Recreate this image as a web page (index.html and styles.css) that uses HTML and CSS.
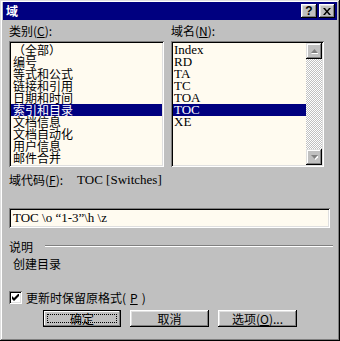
FILE: index.html
```html
<!DOCTYPE html>
<html lang="zh-CN">
<head>
  <meta charset="UTF-8" />
  <title>域</title>
  <link rel="stylesheet" href="styles.css">
</head>
<body>
  <div class="window">

    <!-- 标题栏 -->
    <div class="titlebar">
      <span class="title">域</span>
      <div class="title-btns">
        <button class="tb-btn help">?</button>
        <button class="tb-btn close">
          <svg width="8" height="7" viewBox="0 0 8 7">
            <path d="M0 0h2l2 2.5L6 0h2L5 3.5 8 7H6L4 4.5 2 7H0l3-3.5z" fill="#000"/>
          </svg>
        </button>
      </div>
    </div>

    <div class="content">
      <!-- 两个列表 -->
      <div class="lists">
        <div class="col col-left">
          <div class="label">类别(<u>C</u>):</div>
          <div class="listbox">
            <ul class="items">
              <li>（全部）</li>
              <li>编号</li>
              <li>等式和公式</li>
              <li>链接和引用</li>
              <li>日期和时间</li>
              <li class="selected">索引和目录</li>
              <li>文档信息</li>
              <li>文档自动化</li>
              <li>用户信息</li>
              <li>邮件合并</li>
            </ul>
          </div>
        </div>
        <div class="col col-right">
          <div class="label">域名(<u>N</u>):</div>
          <div class="listbox">
            <ul class="items serif">
              <li>Index</li>
              <li>RD</li>
              <li>TA</li>
              <li>TC</li>
              <li>TOA</li>
              <li class="selected">TOC</li>
              <li>XE</li>
            </ul>
            <div class="scrollbar">
              <div class="sb-btn">
                <svg width="7" height="5" viewBox="0 0 7 5"><path d="M4 1l4 4H0z" fill="#fff"/><path d="M3.5 0L7 4H0z" fill="#808080"/></svg>
              </div>
              <div class="sb-track"></div>
              <div class="sb-btn">
                <svg width="7" height="5" viewBox="0 0 7 5"><path d="M1 1h7L4.5 5z" fill="#fff"/><path d="M0 0h7L3.5 4z" fill="#808080"/></svg>
              </div>
            </div>
          </div>
        </div>
      </div>

      <!-- 域代码 -->
      <div class="code-row">
        <span>域代码(<u>F</u>):</span>
        <span class="syntax">TOC [Switches]</span>
      </div>
      <div class="field">TOC \o “1-3”\h \z</div>

      <!-- 说明 -->
      <div class="group">
        <span>说明</span>
        <span class="rule"></span>
      </div>
      <div class="desc">创建目录</div>

      <label class="check">
        <span class="box">
          <svg width="7" height="7" viewBox="0 0 7 7"><path d="M0 2l2 2 5-5v3L2 7 0 5z" fill="#000"/></svg>
        </span>
        更新时保留原格式(<u>P</u>)
      </label>

      <div class="buttons">
        <button class="btn default"><span class="focus">确定</span></button>
        <button class="btn">取消</button>
        <button class="btn">选项(<u>O</u>)...</button>
      </div>
    </div>
  </div>
</body>
</html>
```

FILE: styles.css
```css
* {
  box-sizing: border-box;
}
body {
  margin: 0;
  background: #c0c0c0;
  font-family: "Noto Sans CJK SC", "Liberation Sans", sans-serif;
  font-size: 12px;
  color: #000;
}

/* 窗口外框 */
.window {
  width: 340px;
  height: 341px;
  padding: 2px 3px 3px 3px;
  background: #c0c0c0;
  box-shadow: inset -1px -1px #000, inset 1px 1px #dfdfdf,
              inset -2px -2px #808080, inset 2px 2px #fff;
}

/* 标题栏 */
.titlebar {
  height: 18px;
  background: #000080;
  display: flex;
  align-items: center;
  justify-content: space-between;
  padding: 0 2px 0 3px;
}
.title {
  color: #fff;
  font-weight: 700;
  font-size: 12px;
  line-height: 14px;
}
.title-btns {
  display: flex;
  gap: 2px;
}
.tb-btn {
  width: 16px;
  height: 14px;
  padding: 0;
  border: none;
  background: #c0c0c0;
  box-shadow: inset -1px -1px #000, inset 1px 1px #fff,
              inset -2px -2px #808080, inset 2px 2px #dfdfdf;
  display: flex;
  align-items: center;
  justify-content: center;
  font-family: "Liberation Sans", sans-serif;
  font-weight: 700;
  font-size: 12px;
  line-height: 12px;
}
.tb-btn.close svg {
  margin-top: 0;
}

/* 内容区 */
.content {
  padding: 0 4px 0 6px;
}
.lists {
  display: flex;
  gap: 7px;
}
.col-left {
  width: 155px;
}
.col-right {
  width: 153px;
}
.label {
  height: 21px;
  line-height: 20px;
  padding-top: 1px;
}

/* 列表框 */
.listbox {
  height: 126px;
  background: #fffbf0;
  box-shadow: inset 1px 1px #808080, inset -1px -1px #fff,
              inset 2px 2px #000, inset -2px -2px #dfdfdf;
  padding: 3px 2px 2px 2px;
  display: flex;
  overflow: hidden;
}
.items {
  list-style: none;
  margin: 0;
  padding: 0;
  flex: 1;
}
.items li {
  height: 12px;
  line-height: 12px;
  padding-left: 2px;
  white-space: nowrap;
}
.items li.selected {
  background: #000080;
  color: #fff;
}
.items.serif li {
  font-family: "Liberation Serif", serif;
  font-size: 13px;
  padding-left: 1px;
}

/* 滚动条 */
.scrollbar {
  width: 16px;
  margin-top: -1px;
  display: flex;
  flex-direction: column;
}
.sb-btn {
  height: 16px;
  background: #c0c0c0;
  box-shadow: inset -1px -1px #000, inset 1px 1px #dfdfdf,
              inset -2px -2px #808080, inset 2px 2px #fff;
  display: flex;
  align-items: center;
  justify-content: center;
}
.sb-track {
  flex: 1;
  background-image: conic-gradient(#fff 25%, #c0c0c0 0 50%, #fff 0 75%, #c0c0c0 0);
  background-size: 2px 2px;
}

/* 域代码 */
.code-row {
  height: 26px;
  line-height: 26px;
  display: flex;
  gap: 14px;
}
.syntax {
  font-family: "Liberation Serif", serif;
  font-size: 13px;
}
.field {
  margin-top: 15px;
  width: 321px;
  height: 20px;
  background: #fffbf0;
  box-shadow: inset 1px 1px #808080, inset -1px -1px #fff,
              inset 2px 2px #000, inset -2px -2px #dfdfdf;
  padding: 0 4px;
  font-family: "Liberation Serif", serif;
  font-size: 13px;
  line-height: 20px;
}

/* 说明分组 */
.group {
  margin-top: 11px;
  height: 14px;
  display: flex;
  align-items: center;
  gap: 12px;
}
.rule {
  flex: 1;
  height: 2px;
  border-top: 1px solid #808080;
  border-bottom: 1px solid #fff;
}
.desc {
  margin-top: 4px;
  height: 14px;
  line-height: 14px;
  padding-left: 4px;
}

/* 复选框 */
.check {
  margin-top: 19px;
  height: 14px;
  display: flex;
  align-items: center;
  gap: 4px;
}
.box {
  width: 13px;
  height: 13px;
  background: #fff;
  box-shadow: inset 1px 1px #808080, inset -1px -1px #fff,
              inset 2px 2px #000, inset -2px -2px #dfdfdf;
  display: flex;
  align-items: center;
  justify-content: center;
}

/* 按钮 */
.buttons {
  margin-top: 6px;
  padding-left: 34px;
  display: flex;
  gap: 9px;
}
.btn {
  width: 79px;
  height: 17px;
  padding: 0;
  border: none;
  background: #c0c0c0;
  box-shadow: inset -1px -1px #000, inset 1px 1px #fff,
              inset -2px -2px #808080, inset 2px 2px #dfdfdf;
  font-family: "Noto Sans CJK SC", "Liberation Sans", sans-serif;
  font-size: 12px;
  line-height: 15px;
  color: #000;
}
.btn.default {
  width: 78px;
  border: 1px solid #000;
  padding: 3px;
  box-shadow: inset -1px -1px #808080, inset 1px 1px #fff;
  display: flex;
}
.focus {
  flex: 1;
  border: 1px dotted #000;
  line-height: 7px;
  display: flex;
  align-items: center;
  justify-content: center;
}
```
